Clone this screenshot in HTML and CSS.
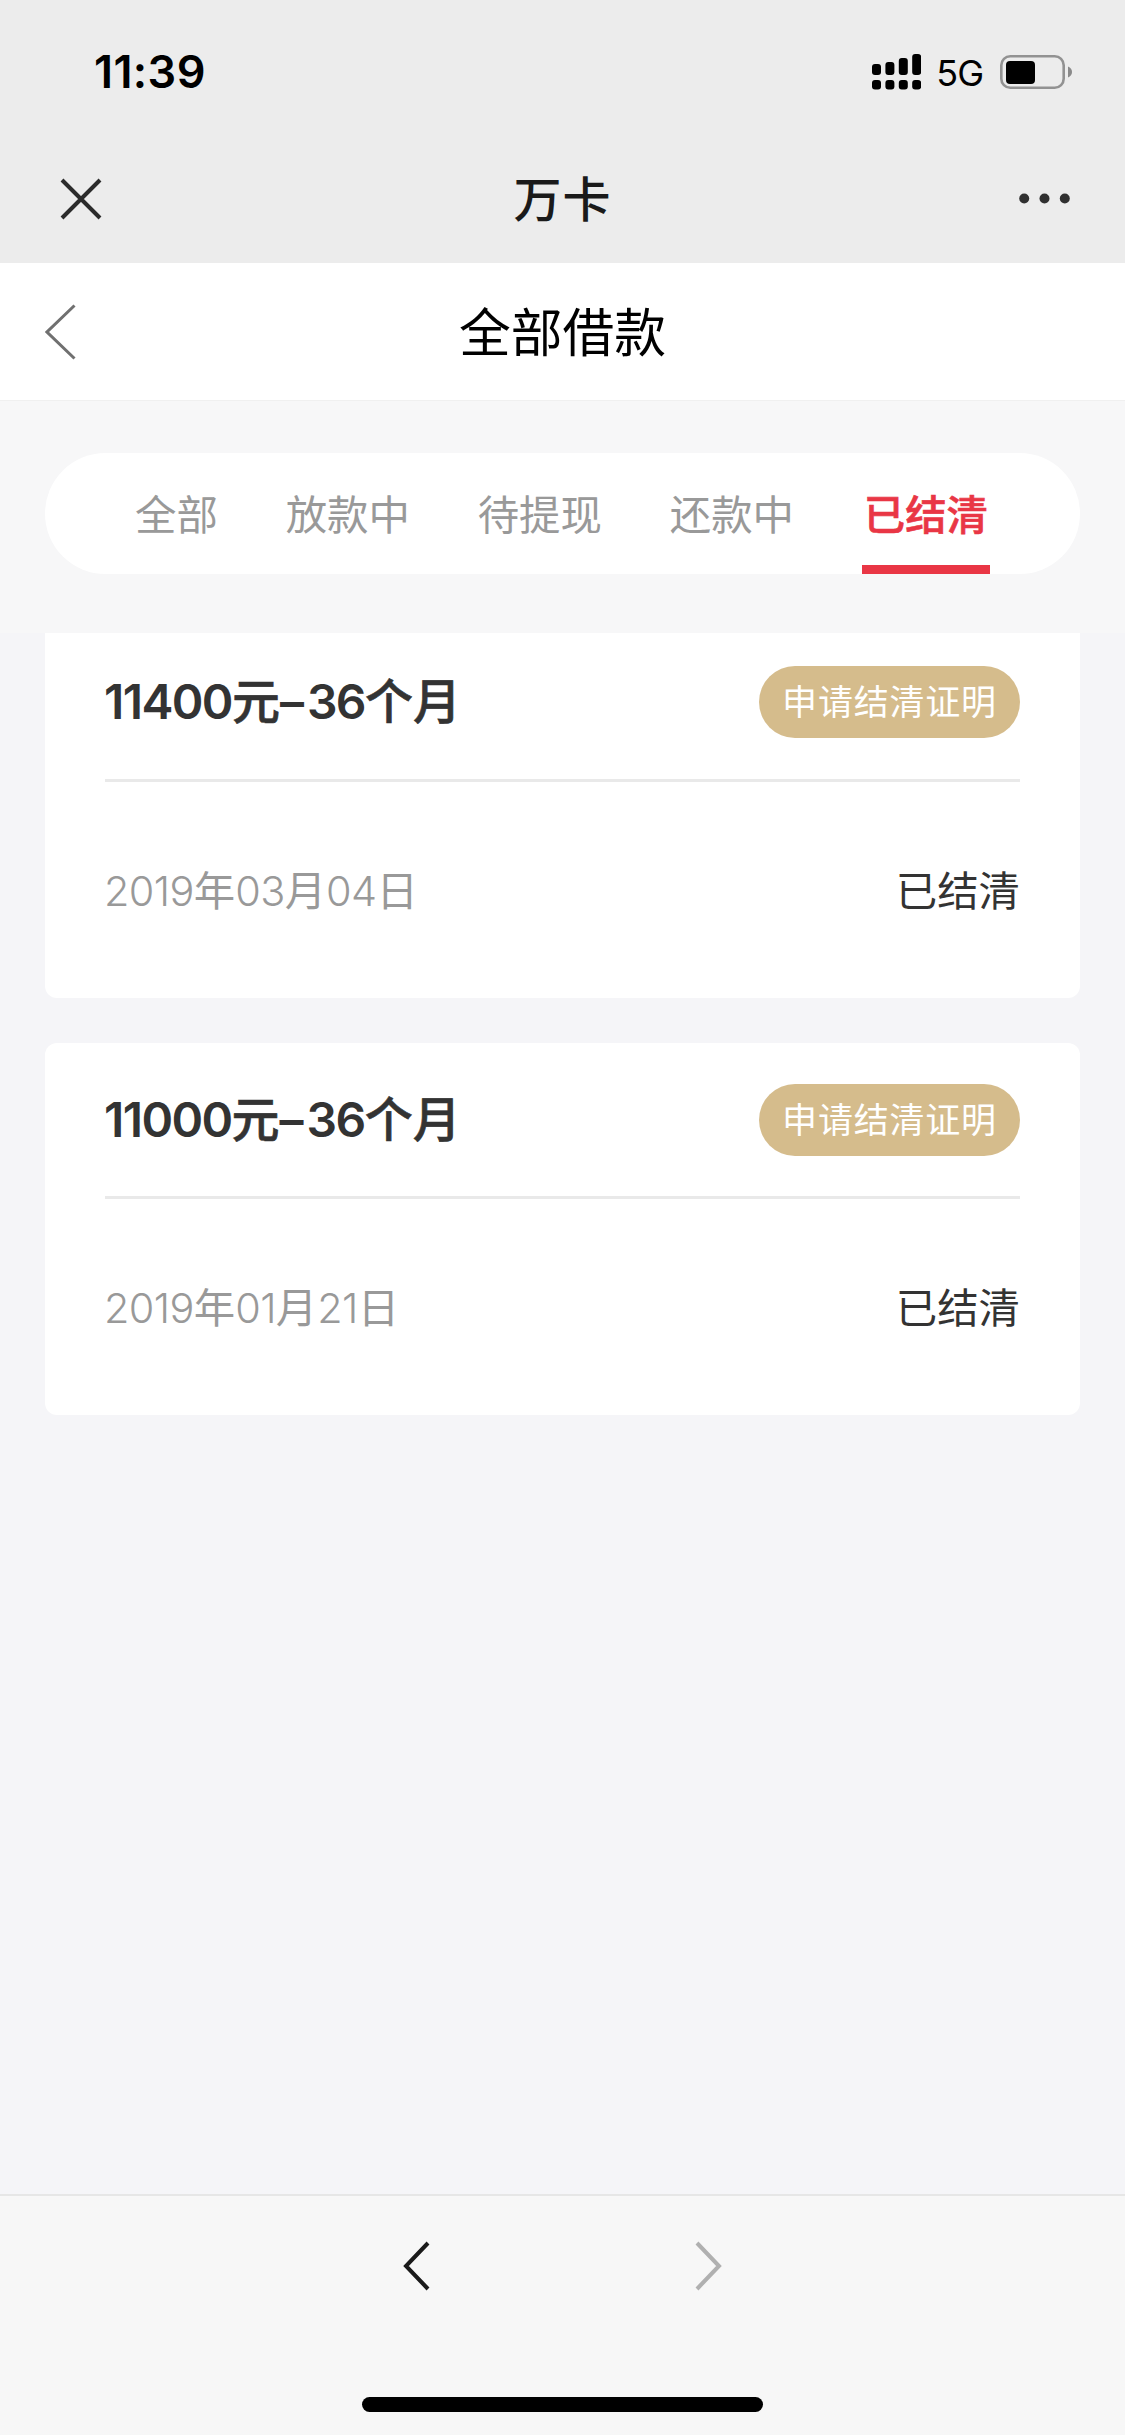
FILE: index.html
```html
<!DOCTYPE html>
<html lang="zh-CN">
<head>
<meta charset="utf-8">
<title>万卡</title>
<link rel="stylesheet" href="styles.css">
</head>
<body>
<div class="app">
  <div class="statusbar">
    <span class="time">11:39</span>
    <div class="indicators">
      <svg class="signal" viewBox="0 0 49.200 36" width="49.200" height="36">
        <rect x="0" y="10" width="9" height="11" rx="3"/>
        <rect x="13.4" y="8" width="9" height="13" rx="3"/>
        <rect x="26.8" y="4" width="9" height="17" rx="3"/>
        <rect x="40.2" y="0" width="9" height="21" rx="3"/>
        <rect x="0" y="26" width="9" height="9.5" rx="3"/>
        <rect x="13.4" y="26" width="9" height="9.5" rx="3"/>
        <rect x="26.8" y="26" width="9" height="9.5" rx="3"/>
        <rect x="40.2" y="26" width="9" height="9.5" rx="3"/>
      </svg>
      <span class="network">5G</span>
      <svg class="battery" viewBox="0 0 72 34" width="72" height="34">
        <rect x="1.3" y="1.3" width="62.4" height="31.4" rx="9" fill="none" stroke="#929292" stroke-width="2.6"/>
        <rect x="6" y="6" width="29" height="23" rx="4"/>
        <path d="M68 11.500C70.600 12.500 72 14.500 72 17S70.600 21.500 68 22.500Z" fill="#8a8a8a"/>
      </svg>
    </div>
  </div>

  <div class="titlebar">
    <svg viewBox="0 0 42 42" width="42" height="42" stroke="#2b2b2b" stroke-width="4"><path d="M2 2 40 40M40 2 2 40"/></svg>
    <h1 class="app-name">万卡</h1>
    <svg class="more" viewBox="0 0 51 11" width="51" height="11" fill="#303030"><circle cx="5.200" cy="5.500" r="5"/><circle cx="25.500" cy="5.500" r="5"/><circle cx="45.800" cy="5.500" r="5"/></svg>
  </div>

  <div class="pagehead">
    <svg viewBox="0 0 31 56" width="31" height="56" fill="none" stroke="#707070" stroke-width="3"><path d="M29.500 1.500 2 28 29.500 54.500"/></svg>
    <h2 class="page-title">全部借款</h2>
    <span></span>
  </div>

  <div class="tabzone">
    <nav class="tabs">
      <span class="tab">全部</span>
      <span class="tab">放款中</span>
      <span class="tab">待提现</span>
      <span class="tab">还款中</span>
      <span class="tab tab-active">已结清</span>
    </nav>
  </div>

  <main class="loans">
    <section class="card card-first">
      <div class="card-head">
        <span class="amount"><b class="num">11400</b>元<b class="dash">–</b><b class="num">36</b>个月</span>
        <span class="proof">申请结清证明</span>
      </div>
      <div class="card-body">
        <span class="date"><b>2019</b>年<b>03</b>月<b>04</b>日</span>
        <span class="state">已结清</span>
      </div>
    </section>
    <section class="card">
      <div class="card-head">
        <span class="amount"><b class="num">11000</b>元<b class="dash">–</b><b class="num">36</b>个月</span>
        <span class="proof">申请结清证明</span>
      </div>
      <div class="card-body">
        <span class="date"><b>2019</b>年<b>01</b>月<b>21</b>日</span>
        <span class="state">已结清</span>
      </div>
    </section>
  </main>

  <footer class="toolbar">
    <div class="history">
      <svg viewBox="0 0 27 50" width="27" height="50" fill="none" stroke="#1a1a1a" stroke-width="4"><path d="M25 2 3 25 25 48"/></svg>
      <svg viewBox="0 0 27 50" width="27" height="50" fill="none" stroke="#b0b0b0" stroke-width="4"><path d="M2 2 24 25 2 48"/></svg>
    </div>
    <div class="home"></div>
  </footer>
</div>
</body>
</html>
```
FILE: styles.css
```css
* { box-sizing: border-box; margin: 0; padding: 0; }
svg { display: block; }
body {
  font-family: Inter, "Noto Sans CJK SC", sans-serif;
  background: #f5f5f8;
  color: #333;
}
.app { width: 1125px; height: 2435px; display: flex; flex-direction: column; overflow: hidden; }

.statusbar {
  height: 132px;
  padding: 12px 53px 0 94px;
  background: #ececec;
  color: #000;
  display: flex;
  justify-content: space-between;
  align-items: center;
}
.time { font-size: 45px; font-weight: 600; line-height: 60px; letter-spacing: 0.4px; }
.indicators { display: flex; align-items: center; }
.network { font-size: 36px; line-height: 40px; margin: 2px 17px 0 15px; letter-spacing: -1px; }

.titlebar, .pagehead {
  display: grid;
  grid-template-columns: 1fr auto 1fr;
  align-items: center;
}
.titlebar { height: 131px; padding: 2px 60px 0; background: #ececec; }
.more { justify-self: end; margin-right: -5px; }
.app-name { padding-top: 3px; font-size: 48px; font-weight: 500; line-height: 60px; letter-spacing: 1px; color: #1a1a1a; }

.pagehead { height: 138px; padding: 0 45px; background: #fff; border-bottom: 1px solid #f0f0f0; }
.page-title { padding-top: 3px; font-size: 51.75px; font-weight: 400; line-height: 60px; color: #000; }

.tabzone { height: 232px; padding: 52px 45px 0; background: #f7f7f8; }
.tabs {
  height: 121px;
  padding: 0 90px;
  border-radius: 61px;
  background: #fff;
  display: flex;
  justify-content: space-between;
}
.tab { font-size: 41.4px; line-height: 124px; height: 121px; font-weight: 400; color: #999; }
.tab-active { padding: 0 2px; color: #e93645; font-weight: 500; -webkit-text-stroke: 0.6px #e93645; box-shadow: inset 0 -9px #e93645; }

.loans { flex: 1; padding: 0 45px; display: flex; flex-direction: column; gap: 45px; }
.card { height: 372px; padding: 0 60px; background: #fff; border-radius: 12px; }
.card-first { height: 365px; border-radius: 0 0 12px 12px; }
.card-head {
  height: 156px;
  border-bottom: 3px solid #e9e9e9;
  display: flex;
  justify-content: space-between;
  align-items: center;
}
.card-first .card-head { height: 149px; }
.card-first .card-head > * { margin-top: -8px; }
.amount { font-size: 48px; line-height: 60px; font-weight: 500; -webkit-text-stroke: 0.6px #333; }
.amount b { font-weight: 600; -webkit-text-stroke: 0; }
.num { letter-spacing: -1.6px; }
.dash { margin-right: 3px; }
.amount, .date { margin-left: -1px; }
.proof {
  width: 261px;
  height: 72px;
  border-radius: 36px;
  background: #d5bc8c;
  color: #fff;
  font-size: 35px;
  letter-spacing: 0.8px;
  line-height: 73px;
  text-align: center;
}
.card-body { height: 216px; padding-top: 1px; display: flex; justify-content: space-between; align-items: center; font-size: 41.4px; line-height: 60px; }
.date { color: #999; }
.date b { font-weight: 300; letter-spacing: -0.6px; }

.toolbar {
  height: 241px;
  background: #f7f7f7;
  border-top: 2px solid #e6e6e6;
  display: flex;
  flex-direction: column;
  align-items: center;
  justify-content: space-between;
  padding: 45px 0 23px;
}
.history { width: 319px; display: flex; justify-content: space-between; }
.home { width: 401px; height: 15px; border-radius: 8px; background: #000; }
```
